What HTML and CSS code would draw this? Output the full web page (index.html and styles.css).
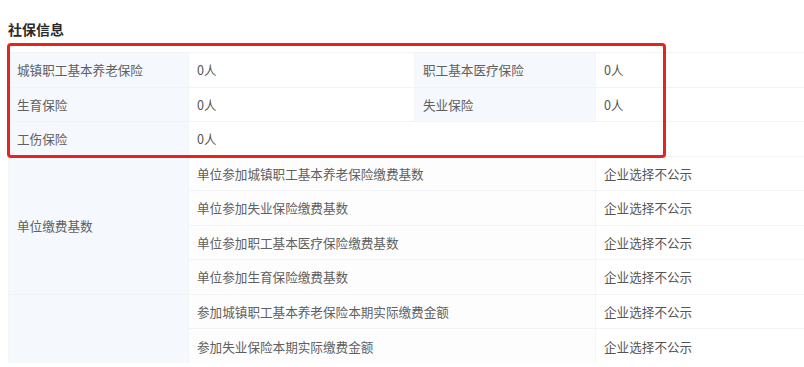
FILE: index.html
```html
<!DOCTYPE html>
<html lang="zh">
<head>
<meta charset="utf-8">
<link rel="stylesheet" href="styles.css">
</head>
<body>
<div class="page">
  <h2 class="title">社保信息</h2>
  <div class="table-wrap">
    <table class="info">
      <colgroup>
        <col class="c1"><col class="c2"><col class="c3"><col class="c4">
      </colgroup>
      <tbody>
        <tr><td class="lbl">城镇职工基本养老保险</td><td class="val">0人</td><td class="lbl">职工基本医疗保险</td><td class="val">0人</td></tr>
        <tr><td class="lbl">生育保险</td><td class="val">0人</td><td class="lbl">失业保险</td><td class="val">0人</td></tr>
        <tr><td class="lbl">工伤保险</td><td class="val">0人</td><td class="val empty" colspan="2"></td></tr>
        <tr><td class="lbl" rowspan="4">单位缴费基数</td><td class="sub" colspan="2">单位参加城镇职工基本养老保险缴费基数</td><td class="val">企业选择不公示</td></tr>
        <tr><td class="sub" colspan="2">单位参加失业保险缴费基数</td><td class="val">企业选择不公示</td></tr>
        <tr><td class="sub" colspan="2">单位参加职工基本医疗保险缴费基数</td><td class="val">企业选择不公示</td></tr>
        <tr><td class="sub" colspan="2">单位参加生育保险缴费基数</td><td class="val">企业选择不公示</td></tr>
        <tr><td class="lbl" rowspan="2"></td><td class="sub" colspan="2">参加城镇职工基本养老保险本期实际缴费金额</td><td class="val">企业选择不公示</td></tr>
        <tr><td class="sub" colspan="2">参加失业保险本期实际缴费金额</td><td class="val">企业选择不公示</td></tr>
      </tbody>
    </table>
    <div class="highlight"></div>
  </div>
</div>
</body>
</html>
```

FILE: styles.css
```css
html, body {
  margin: 0;
  padding: 0;
  background: #ffffff;
  overflow: hidden;
}
body {
  font-family: "Noto Sans CJK SC", "Noto Sans", sans-serif;
  color: #555;
}
.page {
  padding: 19px 0 0 8px;
}
.title {
  margin: 0 0 13px 0;
  font-size: 14px;
  line-height: 20px;
  font-weight: 700;
  color: #2b2b2b;
}
.table-wrap {
  position: relative;
  width: 796px;
}
.info {
  border-collapse: collapse;
  table-layout: fixed;
  width: 796px;
  font-size: 12.6px;
}
.c1 { width: 180px; }
.c2 { width: 226px; }
.c3 { width: 181px; }
.c4 { width: 209px; }
.info td {
  height: 34.5px;
  padding: 0 8px;
  box-sizing: border-box;
  border-top: 1px solid #f1f3f6;
  border-left: 1px solid #f4f5f8;
  white-space: nowrap;
  overflow: hidden;
  vertical-align: middle;
}
.info .lbl {
  background: #f5f8fd;
  color: #606060;
}
.info .val {
  background: #ffffff;
  color: #555555;
}
.info .empty {
  border-left-color: #ffffff;
}
.info .sub {
  background: #fdfdfe;
  color: #606060;
}
.highlight {
  position: absolute;
  left: -1px;
  top: -9px;
  width: 659px;
  height: 115px;
  box-sizing: border-box;
  border: 3px solid #e3241f;
  border-radius: 4px;
  pointer-events: none;
}
```
